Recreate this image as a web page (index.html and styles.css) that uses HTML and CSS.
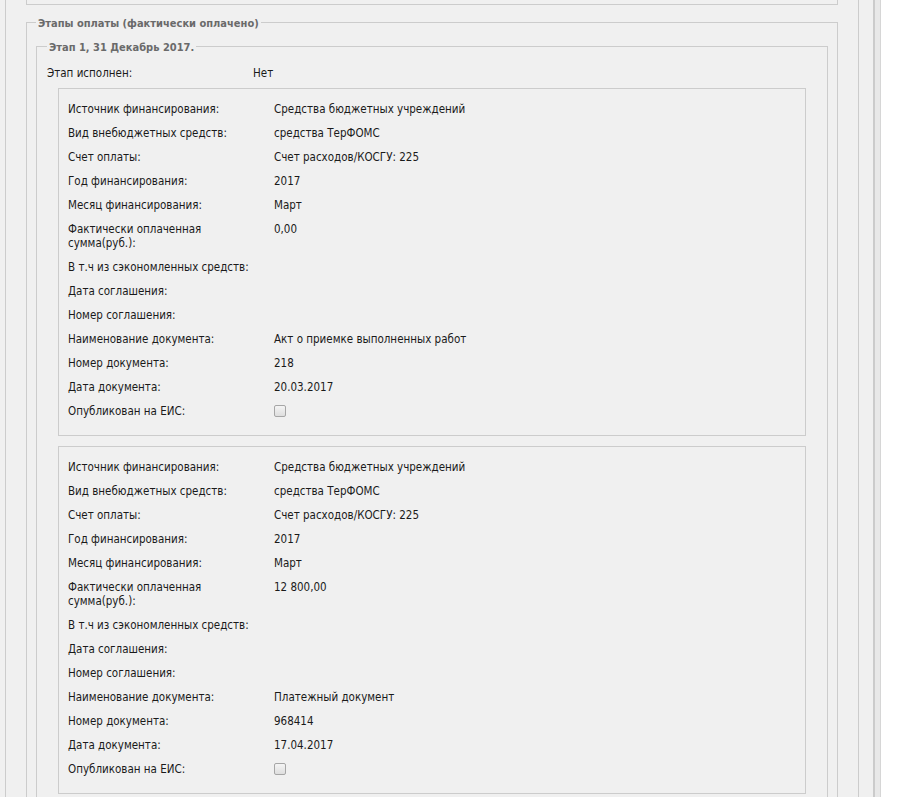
FILE: index.html
```html
<!DOCTYPE html>
<html lang="ru">
<head>
  <meta charset="UTF-8" />
  <title>Этапы оплаты</title>
  <link rel="stylesheet" href="styles.css">
</head>
<body>
  <div class="page">
    <div class="panel">
      <div class="prev"></div>

      <fieldset class="group">
        <legend>Этапы оплаты (фактически оплачено)</legend>

        <fieldset class="stage">
          <legend>Этап 1, 31 Декабрь 2017.</legend>

          <div class="row">
            <span class="label">Этап исполнен:</span>
            <span class="value">Нет</span>
          </div>

          <div class="payment">
            <div class="row"><span class="label">Источник финансирования:</span><span class="value">Средства бюджетных учреждений</span></div>
            <div class="row"><span class="label">Вид внебюджетных средств:</span><span class="value">средства ТерФОМС</span></div>
            <div class="row"><span class="label">Счет оплаты:</span><span class="value">Счет расходов/КОСГУ: 225</span></div>
            <div class="row"><span class="label">Год финансирования:</span><span class="value">2017</span></div>
            <div class="row"><span class="label">Месяц финансирования:</span><span class="value">Март</span></div>
            <div class="row"><span class="label">Фактически оплаченная сумма(руб.):</span><span class="value">0,00</span></div>
            <div class="row"><span class="label">В т.ч из сэкономленных средств:</span><span class="value"></span></div>
            <div class="row"><span class="label">Дата соглашения:</span><span class="value"></span></div>
            <div class="row"><span class="label">Номер соглашения:</span><span class="value"></span></div>
            <div class="row"><span class="label">Наименование документа:</span><span class="value">Акт о приемке выполненных работ</span></div>
            <div class="row"><span class="label">Номер документа:</span><span class="value">218</span></div>
            <div class="row"><span class="label">Дата документа:</span><span class="value">20.03.2017</span></div>
            <div class="row"><span class="label">Опубликован на ЕИС:</span><span class="value"><input type="checkbox" class="check" disabled></span></div>
          </div>

          <div class="payment">
            <div class="row"><span class="label">Источник финансирования:</span><span class="value">Средства бюджетных учреждений</span></div>
            <div class="row"><span class="label">Вид внебюджетных средств:</span><span class="value">средства ТерФОМС</span></div>
            <div class="row"><span class="label">Счет оплаты:</span><span class="value">Счет расходов/КОСГУ: 225</span></div>
            <div class="row"><span class="label">Год финансирования:</span><span class="value">2017</span></div>
            <div class="row"><span class="label">Месяц финансирования:</span><span class="value">Март</span></div>
            <div class="row"><span class="label">Фактически оплаченная сумма(руб.):</span><span class="value">12 800,00</span></div>
            <div class="row"><span class="label">В т.ч из сэкономленных средств:</span><span class="value"></span></div>
            <div class="row"><span class="label">Дата соглашения:</span><span class="value"></span></div>
            <div class="row"><span class="label">Номер соглашения:</span><span class="value"></span></div>
            <div class="row"><span class="label">Наименование документа:</span><span class="value">Платежный документ</span></div>
            <div class="row"><span class="label">Номер документа:</span><span class="value">968414</span></div>
            <div class="row"><span class="label">Дата документа:</span><span class="value">17.04.2017</span></div>
            <div class="row"><span class="label">Опубликован на ЕИС:</span><span class="value"><input type="checkbox" class="check" disabled></span></div>
          </div>
        </fieldset>
      </fieldset>
    </div>
  </div>
</body>
</html>
```

FILE: styles.css
```css
html, body {
  margin: 0;
  background: #fff;
}
body {
  font-family: 'DejaVu Sans Condensed', 'DejaVu Sans', sans-serif;
  font-stretch: condensed;
  font-size: 11.5px;
  color: #1a1a1a;
}
.page {
  width: 873px;
  background: #f0f0f0;
  border-right: 2px solid #cbcbcb;
  box-shadow: 5px 0 0 #e8e8e8, 6px 0 0 #d6d6d6;
  padding-bottom: 40px;
}
.panel {
  margin-left: 5px;
  width: 812px;
  border-left: 1px solid #cccccc;
  border-right: 1px solid #cccccc;
  padding: 0 20px 20px;
}
.prev {
  height: 4px;
  border: 1px solid #cccccc;
  border-top: none;
}
fieldset {
  margin: 0;
  border: 1px solid #cccccc;
  min-width: 0;
}
legend {
  padding: 3px 2px 0;
  line-height: 14px;
  font-size: 11px;
  font-weight: bold;
  color: #6a6a6a;
}
.group {
  margin-top: 9px;
  padding: 7px 9px 20px 9px;
}
.stage {
  padding: 6px 10px 20px 10px;
}
.row {
  display: grid;
  grid-template-columns: 206px 1fr;
  padding: 5px 0;
  line-height: 14px;
}
.label {
  padding-right: 12px;
}
.payment {
  margin: 3px 11px 0;
  border: 1px solid #cccccc;
  padding: 8px 9px 12px;
}
.payment + .payment {
  margin-top: 10px;
}
.check {
  appearance: none;
  -webkit-appearance: none;
  display: block;
  margin: 1px 0 0;
  width: 12px;
  height: 12px;
  border: 1px solid #a6a6a6;
  border-radius: 2px;
  background: linear-gradient(#f4f4f4, #dedede);
  box-sizing: border-box;
}
```
